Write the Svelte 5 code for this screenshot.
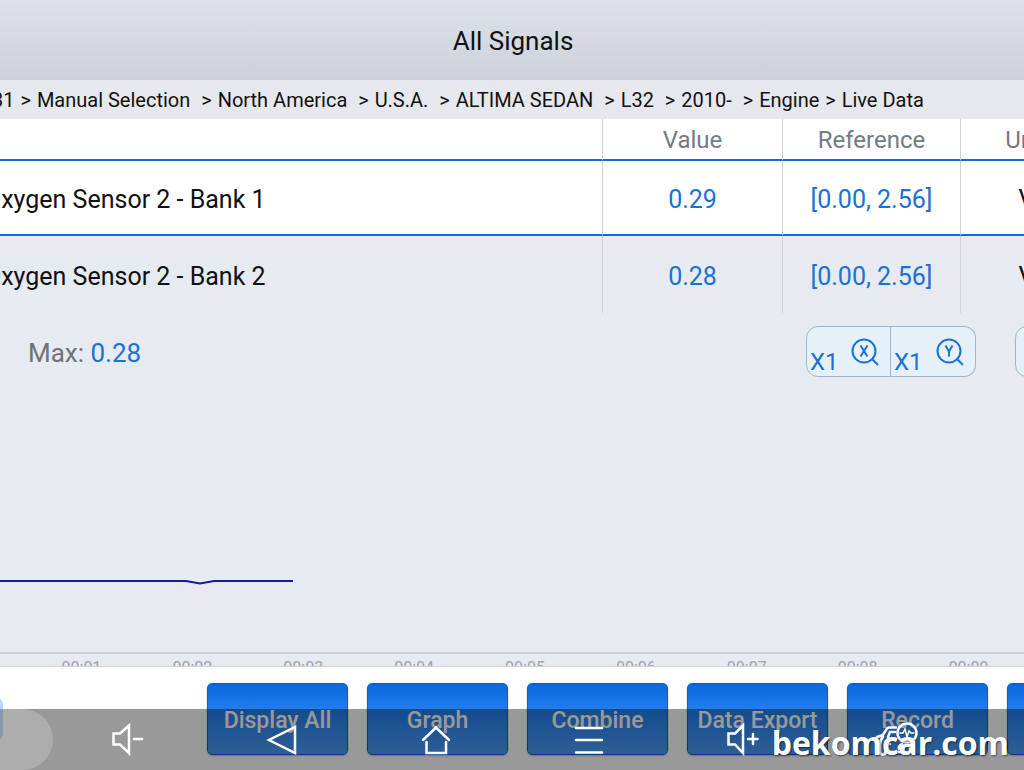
<script lang="ts">
	const crumbs = ['31', 'Manual Selection ', 'North America ', 'U.S.A. ', 'ALTIMA SEDAN ', 'L32 ', '2010- ', 'Engine', 'Live Data']

	const signals = [
		{ name: 'Oxygen Sensor 2 - Bank 1', value: '0.29', reference: '[0.00, 2.56]', unit: 'V' },
		{ name: 'Oxygen Sensor 2 - Bank 2', value: '0.28', reference: '[0.00, 2.56]', unit: 'V' }
	]

	const ticks = ['00:01', '00:02', '00:03', '00:04', '00:05', '00:06', '00:07', '00:08', '00:09']
	const actions = ['Display All', 'Graph', 'Combine', 'Data Export', 'Record']

	let selected = $state(0)
</script>

<div class="screen">
	<header>
		<h1>All Signals</h1>
	</header>

	<nav class="crumbs" aria-label="Breadcrumb">
		{#each crumbs as crumb, i}{#if i > 0}<span>{' > '}</span>{/if}<a href="#top">{crumb}</a>{/each}
	</nav>

	<main>
		<table>
			<colgroup>
				<col />
				<col class="col-value" />
				<col class="col-reference" />
				<col class="col-unit" />
			</colgroup>
			<thead>
				<tr>
					<th aria-label="Name"></th>
					<th>Value</th>
					<th>Reference</th>
					<th>Unit</th>
				</tr>
			</thead>
			<tbody>
				{#each signals as signal, i (signal.name)}
					<tr class:selected={selected === i} onclick={() => (selected = i)}>
						<td class="name">{signal.name}</td>
						<td class="reading">{signal.value}</td>
						<td class="reading">{signal.reference}</td>
						<td>{signal.unit}</td>
					</tr>
				{/each}
			</tbody>
		</table>

		<section class="graph" aria-label="Signal graph">
			<div class="toolbar">
				<p>Max: <strong>0.28</strong></p>
				<div class="zoom">
					{#each ['X', 'Y'] as axis}
						<button type="button" aria-label="Zoom {axis} axis">
							<span>X1</span>
							<svg width="30" height="30" viewBox="0 0 30 30" aria-hidden="true">
								<circle cx="15" cy="14" r="11.5" />
								<path d="M22.5 21.5 L29 28" />
								{#if axis === 'X'}
									<path d="M11.5 8.5 L18.5 19.5 M18.5 8.5 L11.5 19.5" />
								{:else}
									<path d="M11.5 8.5 L15 14.5 L18.5 8.5 M15 14.5 V19.5" />
								{/if}
							</svg>
						</button>
					{/each}
				</div>
				<button type="button" class="expand" aria-label="Expand graph"></button>
			</div>
			<svg class="plot" viewBox="0 0 1024 275" preserveAspectRatio="none" aria-hidden="true">
				<path d="M0 204 H186 L200 206.5 L214 204 H293" />
			</svg>
			<div class="ticks">
				{#each ticks as tick}
					<span>{tick}</span>
				{/each}
			</div>
		</section>
	</main>

	<footer>
		<button type="button" class="back" aria-label="Previous" disabled></button>
		{#each actions as action}
			<button type="button" class="action">{action}</button>
		{/each}
		<button type="button" class="action" aria-label="More"></button>
	</footer>

	<nav class="system" aria-label="System">
		<button type="button" aria-label="Volume down">
			<svg width="40" height="40" viewBox="0 0 40 40">
				<path d="M5.5 13.5 H12 L21 5.5 V33 L12 24.5 H5.5 Z" />
				<path d="M26 19 H34" />
			</svg>
		</button>
		<button type="button" aria-label="Back">
			<svg width="40" height="40" viewBox="0 0 40 40">
				<path d="M33 7 V33 L7 20 Z" />
			</svg>
		</button>
		<button type="button" aria-label="Home">
			<svg width="40" height="40" viewBox="0 0 40 40">
				<path d="M7 20 L20 7.5 L33 20 M10.5 22 V33 H30 V22" />
			</svg>
		</button>
		<button type="button" aria-label="Recent apps">
			<svg width="40" height="40" viewBox="0 0 40 40">
				<path d="M7 8 H33 M7 20 H33 M7 32.5 H33" />
			</svg>
		</button>
		<button type="button" aria-label="Volume up">
			<svg width="40" height="40" viewBox="0 0 40 40">
				<path d="M5.5 13.5 H12 L20 5.5 V33 L12 24.5 H5.5 Z" />
				<path d="M25 19 H34.5 M30 14 V24" />
			</svg>
		</button>
		<button type="button" aria-label="Vehicle diagnostics">
			<svg width="44" height="40" viewBox="0 0 44 40">
				<path d="M21 7.5 H14 Q12 7.5 11 10 L8 15 L2 17 M20 12 H15 L13 17 M8 17 Q5 20 5 25 V32 Q6 36 10 34 V32 M10 22 L15 24 M27 24 Q23 26 24 29 M10 32 H30 Q35 36 35 31 V25" />
				<circle cx="32" cy="13" r="9.5" />
				<path class="pulse" d="M25 13 H28 L30 9 L32 17 L34 11 L36 13 H39" />
			</svg>
		</button>
	</nav>

	<span class="watermark">bekomcar.com</span>
</div>

<style>
	:global(body) {
		margin: 0;
	}

	.screen {
		position: relative;
		display: flex;
		flex-direction: column;
		min-height: 100vh;
		overflow: hidden;
		background: #e6eaf1;
		color: #111;
		font-family: Roboto, 'Liberation Sans', sans-serif;
		font-size: 25px;
	}

	button {
		margin: 0;
		padding: 0;
		border: 0;
		background: none;
		font: inherit;
	}

	svg {
		fill: none;
		stroke: currentColor;
		stroke-width: 2;
	}

	header {
		padding: 22px 0 20px;
		background: linear-gradient(#dde1ea, #cdd1da);
		text-align: center;
	}

	h1 {
		margin: 0 0 0 2px;
		font-size: 26px;
		font-weight: 400;
		line-height: 38px;
	}

	.crumbs {
		margin-left: -8px;
		padding-top: 2px;
		background: #e6e8ed;
		font-size: 20px;
		line-height: 37px;
		white-space: pre;
	}

	.crumbs span {
		padding: 0 1px;
	}

	.crumbs a {
		color: inherit;
		text-decoration: none;
	}

	main {
		display: flex;
		flex: 1;
		flex-direction: column;
	}

	/* the unit column runs past the right edge */
	table {
		width: calc(100% + 68px);
		border-collapse: separate;
		border-spacing: 0;
		table-layout: fixed;
	}

	.col-value {
		width: 180px;
	}

	.col-reference {
		width: 178px;
	}

	.col-unit {
		width: 132px;
	}

	th,
	td {
		padding: 2px 0 0;
		border-left: 1px solid #d0d3d8;
		text-align: center;
	}

	th:first-child,
	td:first-child {
		border-left: 0;
	}

	th {
		height: 38px;
		border-bottom: 2px solid #176bd8;
		background: #fff;
		color: #737a85;
		font-size: 24px;
		font-weight: 400;
	}

	td {
		height: 73px;
		padding-top: 4px;
	}

	.selected td {
		height: 69px;
		border-bottom: 2px solid #176bd8;
		background: #fff;
	}

	td.name {
		text-align: left;
		text-indent: -16px;
		white-space: nowrap;
	}

	.reading,
	strong {
		color: #1b70d4;
		font-weight: 400;
	}

	.graph {
		display: flex;
		flex: 1;
		flex-direction: column;
	}

	.toolbar {
		display: flex;
		align-items: center;
		margin-right: -31px;
		padding: 13px 0 0 28px;
	}

	.toolbar p {
		margin: 0;
		padding-top: 2px;
		color: #707277;
		font-size: 26px;
	}

	.zoom {
		display: flex;
		margin: 0 39px 0 auto;
	}

	.zoom button,
	.expand {
		box-sizing: border-box;
		height: 51px;
		border: 1px solid #9db4cc;
		background: #e5f0f9;
		color: #1b70d4;
	}

	.zoom button {
		display: flex;
		align-items: flex-end;
		justify-content: space-between;
		width: 85px;
		padding: 0 11px 9px 3px;
		font-size: 24px;
		line-height: 10px;
	}

	.zoom button:first-child {
		border-radius: 12px 0 0 12px;
	}

	.zoom button:last-child {
		border-left: 0;
		border-radius: 0 12px 12px 0;
	}

	.expand {
		width: 40px;
		border-radius: 12px;
	}

	.plot {
		flex: 1;
		width: 100%;
		min-height: 275px;
		color: #17179f;
	}

	.plot path {
		vector-effect: non-scaling-stroke;
	}

	/* only the tops of the time labels show above the footer */
	.ticks {
		display: grid;
		grid-template-columns: repeat(9, 1fr);
		height: 12px;
		padding-left: 26px;
		overflow: hidden;
		border-top: 2px solid #cbced3;
		color: #a0a3a8;
		font-size: 16px;
		line-height: 28px;
		text-align: center;
	}

	footer {
		display: flex;
		align-items: flex-start;
		gap: 19px;
		height: 87px;
		margin-left: -40px;
		padding-top: 16px;
		border-top: 1px solid #d0d3d8;
		background: #fff;
	}

	.back {
		flex: none;
		width: 43px;
		height: 44px;
		margin: 14px 185px 0 0;
		border-radius: 8px;
		background: #b9d7fa;
	}

	.action {
		box-sizing: border-box;
		flex: none;
		width: 141px;
		height: 72px;
		padding-top: 2px;
		border: 1px solid #0860d0;
		border-radius: 5px;
		background: linear-gradient(#0868df, #2380f0 40%, #4d9df8);
		box-shadow: 0 1px 2px #0004;
		color: #fff;
		font-size: 23px;
		font-weight: 500;
	}

	/* translucent bar drawn over the lower half of the footer */
	.system {
		position: absolute;
		right: 0;
		bottom: 0;
		left: 0;
		display: grid;
		grid-template-columns: repeat(6, 1fr);
		height: 61px;
		padding: 0 50px 0 51px;
		background: rgba(0, 0, 0, 0.4);
	}

	.system::before {
		position: absolute;
		top: 0;
		left: -30px;
		width: 83px;
		height: 61px;
		border-radius: 31px;
		background: rgba(255, 255, 255, 0.2);
		content: '';
	}

	.system button {
		display: flex;
		align-items: center;
		justify-content: center;
		color: #fff;
	}

	.system svg {
		stroke-linecap: round;
		stroke-width: 2.5;
	}

	.system .pulse {
		stroke-width: 1.5;
	}

	.watermark {
		position: absolute;
		right: 15px;
		bottom: 5px;
		color: #fff;
		font-family: 'Open Sans', 'Noto Sans', sans-serif;
		font-size: 32px;
		font-weight: 700;
		line-height: 44px;
		text-shadow: 1px 1px 2px #0008;
		pointer-events: none;
	}
</style>
